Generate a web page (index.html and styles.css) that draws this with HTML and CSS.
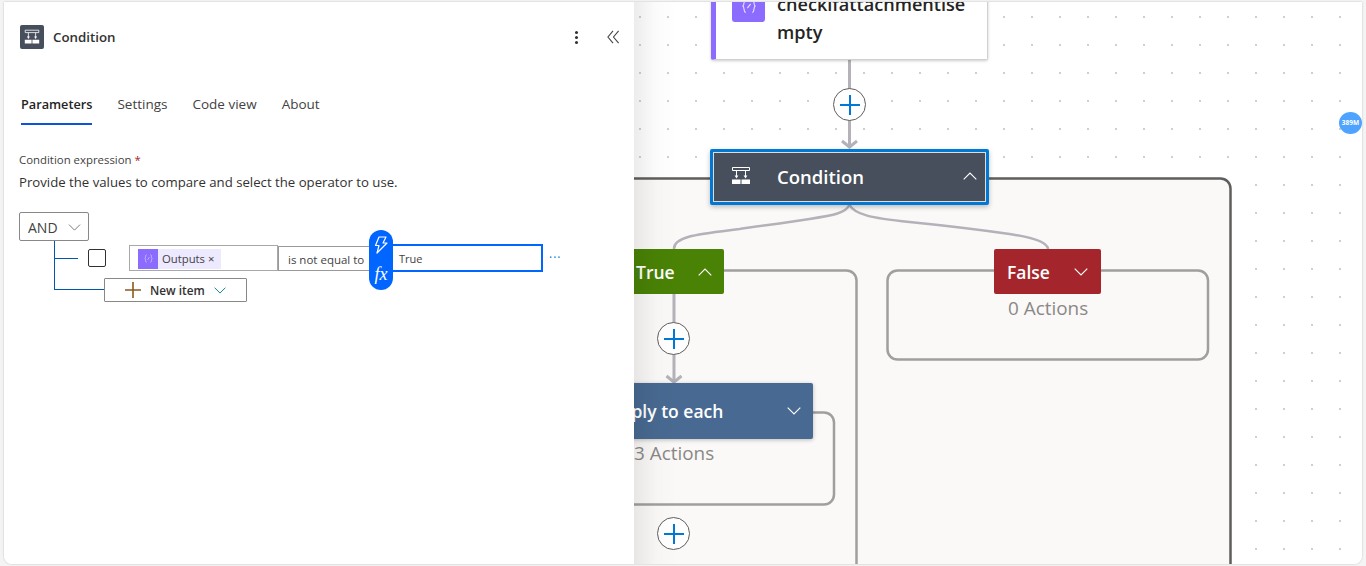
FILE: index.html
```html
<!DOCTYPE html>
<html lang="en">
<head>
<meta charset="utf-8">
<title>Condition</title>
<link rel="stylesheet" href="styles.css">
</head>
<body>
<svg class="defs" width="0" height="0" aria-hidden="true">
  <symbol id="cond" viewBox="0 0 20 20">
    <path d="M1.500 1.500h17v3h-17z M5.500 4.500v5.500 M14.500 4.500v5.500" fill="none" stroke="currentColor" stroke-width="1"/>
    <path d="M3.600 9.500h3.800L5.500 12.500z M12.600 9.500h3.800l-1.900 3z" fill="currentColor"/>
    <path d="M1 13.500h8.500v4.500H1z M10.500 13.500H19v4.500h-8.500z" fill="currentColor"/>
  </symbol>
  <symbol id="plus" viewBox="0 0 20 20">
    <path d="M10 0v20M0 10h20" fill="none" stroke="currentColor" stroke-width="2"/>
  </symbol>
  <symbol id="chev-down" viewBox="0 0 14 8">
    <path d="M.7.7 7 7 13.300.7" fill="none" stroke="currentColor" stroke-width="1.100"/>
  </symbol>
  <symbol id="chev-up" viewBox="0 0 14 8">
    <path d="M.7 7.300 7 1l6.300 6.300" fill="none" stroke="currentColor" stroke-width="1.100"/>
  </symbol>
  <symbol id="expr" viewBox="0 0 20 20">
    <path d="M7 4C5 4 6 9 4.500 10 6 11 5 16 7 16M13 4c2 0 1 5 2.500 6-1.500 1-.5 6-2.500 6M8.500 12l3-4" fill="none" stroke="currentColor" stroke-width="1"/>
  </symbol>
</svg>

<div class="frame">
  <aside class="panel">
    <header class="panel-head">
      <span class="panel-icon"><svg class="ico-16"><use href="#cond"/></svg></span>
      <h1 class="panel-title">Condition</h1>
      <span class="kebab"><i></i><i></i><i></i></span>
      <svg class="collapse" viewBox="0 0 14 14"><path d="M6.500.5 1 7l5.500 6.500M12.500.5 7 7l5.500 6.500" fill="none" stroke="#484644" stroke-width="1.200"/></svg>
    </header>

    <nav class="tabs">
      <span class="tab active">Parameters</span>
      <span class="tab">Settings</span>
      <span class="tab">Code view</span>
      <span class="tab">About</span>
    </nav>

    <div class="field-label">Condition expression <b>*</b></div>
    <p class="field-desc">Provide the values to compare and select the operator to use.</p>

    <div class="builder">
      <div class="and-box">AND <svg class="chev-and"><use href="#chev-down"/></svg></div>
      <div class="tree-v"></div>
      <div class="row">
        <span class="tree-h short"></span>
        <span class="check"></span>
        <div class="operand">
          <span class="token"><span class="token-icon"><svg class="ico-12"><use href="#expr"/></svg></span><span class="token-text">Outputs ×</span></span>
        </div>
        <div class="operator">is not equal to</div>
        <div class="value">True</div>
        <span class="more">···</span>
        <div class="bubble">
          <svg class="bolt" viewBox="0 0 14 18"><path d="M5 1h7L9 7h4L3 17l2-7.500H1.500z" fill="none" stroke="#fff" stroke-width="1.200" stroke-linejoin="round"/></svg>
          <span class="fx">fx</span>
        </div>
      </div>
      <div class="row-new">
        <span class="tree-h long"></span>
        <div class="new-item">
          <svg class="new-plus"><use href="#plus"/></svg>
          <span>New item</span>
          <svg class="new-chev"><use href="#chev-down"/></svg>
        </div>
      </div>
    </div>
  </aside>

  <main class="canvas">
    <svg class="edges" viewBox="634 2 728 562">
      <rect class="g-outer" x="600" y="178.500" width="630.500" height="500" rx="10"/>
      <rect class="g-inner" x="600" y="270.500" width="256.500" height="400" rx="10"/>
      <rect class="g-inner" x="887.500" y="270.500" width="320.500" height="89" rx="10"/>
      <rect class="g-inner" x="600" y="412.500" width="234" height="92" rx="10"/>
      <g class="wires">
        <path d="M849.500 59v87"/>
        <path d="M842 141l7.500 6 7.500-6"/>
        <path d="M674 294v87"/>
        <path d="M666.500 376l7.500 6 7.500-6"/>
      </g>
      <g class="curves">
        <path d="M849.500 205c-4 8-15 10-40 14-25 4-50 7-70 10-40 5-66 7-65.500 20"/>
        <path d="M849.500 205c5 9 20 13 60 17 30 3 65 7 100 12 20 3 38 8 38.500 15"/>
      </g>
    </svg>

    <div class="node action">
      <span class="act-icon"><svg class="ico-22"><use href="#expr"/></svg></span>
      <span class="act-text">checkifattachmentise mpty</span>
    </div>

    <div class="node cond-node">
      <svg class="cond-ico"><use href="#cond"/></svg>
      <span class="cond-text">Condition</span>
      <svg class="chev cond-chev"><use href="#chev-up"/></svg>
    </div>

    <div class="node branch true-b">
      <span>True</span>
      <svg class="chev"><use href="#chev-up"/></svg>
    </div>
    <div class="node branch false-b">
      <span>False</span>
      <svg class="chev"><use href="#chev-down"/></svg>
    </div>
    <div class="count false-c">0 Actions</div>

    <div class="node each">
      <span>Apply to each</span>
      <svg class="chev"><use href="#chev-down"/></svg>
    </div>
    <div class="count each-c">3 Actions</div>

    <span class="add a1"><svg class="ico-20"><use href="#plus"/></svg></span>
    <span class="add a2"><svg class="ico-20"><use href="#plus"/></svg></span>
    <span class="add a3"><svg class="ico-20"><use href="#plus"/></svg></span>

    <span class="mem">389M</span>
  </main>
</div>
</body>
</html>
```
FILE: styles.css
```css
* { box-sizing: border-box; }
html, body { margin: 0; height: 100%; }
body {
  background: #f4f4f4;
  font-family: "Open Sans", "Liberation Sans", sans-serif;
  color: #323130;
  overflow: hidden;
}
.defs { position: absolute; }

.frame {
  display: flex;
  height: 562px;
  margin: 2px 4px;
  border-radius: 0 0 8px 8px;
  overflow: hidden;
  background: #fff;
  box-shadow: 0 0 2px rgba(0,0,0,.25);
}

/* left panel */
.panel {
  width: 630px;
  flex: none;
  padding: 23px 14px 0 15px;
  background: #fff;
  position: relative;
  z-index: 2;
}
.panel-head { display: flex; align-items: center; height: 24px; margin-left: 1px; }
.panel-icon {
  width: 24px; height: 24px;
  display: flex; align-items: center; justify-content: center;
  background: #474f5c; border-radius: 2px; color: #fff;
}
.ico-16 { width: 16px; height: 16px; }
.panel-title { margin: 0 0 0 9px; font-size: 13.300px; font-weight: 600; flex: 1; }
.kebab { display: flex; flex-direction: column; gap: 2px; margin-right: 29px; }
.kebab i { width: 3px; height: 3px; border-radius: 50%; background: #323130; }
.collapse { width: 13px; height: 14px; }

.tabs { display: flex; margin: 46px 0 0 2px; gap: 25px; height: 30px; }
.tab { font-size: 13.500px; color: #424242; line-height: 19px; height: 30px; white-space: nowrap; }
.tab.active { font-size: 12.700px; font-weight: 600; color: #242424; border-bottom: 2px solid #0f54d8; }

.field-label { margin-top: 27px; font-size: 11.400px; line-height: 16px; color: #424242; }
.field-label b { color: #a4262c; font-weight: 400; }
.field-desc { margin: 5px 0 0; font-size: 13.200px; line-height: 18px; color: #323130; }

.builder { position: relative; margin-top: 21px; height: 100px; }
.and-box {
  width: 70px; height: 29px;
  display: flex; align-items: center; justify-content: space-between;
  padding: 1px 7px 0 8px;
  border: 1px solid #8a8886; border-radius: 2px;
  font-size: 14px; color: #424242;
}
.chev-and { width: 13px; height: 7px; color: #797775; }
.tree-v { position: absolute; left: 35px; top: 29px; width: 1px; height: 49px; background: #0058ad; }
.tree-h { position: absolute; height: 1px; background: #0058ad; }
.tree-h.short { left: 35px; top: 13px; width: 24px; }
.tree-h.long { left: 35px; top: 12px; width: 50px; }

.row { position: absolute; left: 0; top: 33px; width: 560px; height: 26px; }
.check {
  position: absolute; left: 69px; top: 4px;
  width: 18px; height: 18px;
  border: 1px solid #323130; border-radius: 2px;
}
.operand {
  position: absolute; left: 110px; top: 0;
  width: 149px; height: 26px;
  border: 1px solid #a8a8a8; padding: 2px 0 0 8px;
}
.token { display: inline-flex; height: 20px; background: #ede9fe; align-items: center; width: 83px; }
.token-icon { width: 20px; height: 20px; background: #8c6cff; display: flex; align-items: center; justify-content: center; color: #e0d8ff; flex: none; }
.ico-12 { width: 13px; height: 13px; }
.token-text { margin-left: 4px; font-size: 11.300px; color: #424242; white-space: nowrap; }
.operator {
  position: absolute; left: 259px; top: 1px;
  width: 96px; height: 25px;
  border: 1px solid #999; border-right: none;
  font-size: 11.500px; line-height: 26px; padding-left: 9px; color: #424242; white-space: nowrap;
}
.value {
  position: absolute; left: 372px; top: -1px;
  width: 152px; height: 28px;
  border: 2px solid #0066ff;
  font-size: 11px; line-height: 25px; padding-left: 6px; color: #424242;
}
.more { position: absolute; left: 530px; top: 5px; font-size: 12px; line-height: 16px; color: #0078d4; letter-spacing: 1px; }
.bubble {
  position: absolute; left: 350px; top: -15px;
  width: 24px; height: 60px;
  background: #0066ff; border-radius: 12px;
  display: flex; flex-direction: column; align-items: center; justify-content: space-between;
  padding: 6px 0 6px;
  color: #fff;
}
.bolt { width: 14px; height: 18px; }
.fx { font-family: "Liberation Serif", serif; font-style: italic; font-weight: 400; font-size: 18px; line-height: 20px; }

.row-new { position: absolute; left: 0; top: 65px; width: 300px; height: 24px; }
.new-item {
  position: absolute; left: 85px; top: 1px;
  width: 143px; height: 24px;
  border: 1px solid #8a8886; border-radius: 1px;
  display: flex; align-items: center; padding-left: 20px;
  font-size: 11.800px; font-weight: 600; color: #323130;
}
.new-plus { width: 16px; height: 16px; color: #8a5a1e; margin-right: 9px; flex: none; }
.new-chev { width: 12px; height: 7px; margin-left: 9px; color: #038387; }

/* canvas */
.canvas {
  flex: 1;
  position: relative;
  overflow: hidden;
  background-color: #fff;
  background-image: radial-gradient(circle, #b5b5b5 0.6px, transparent 0.9px);
  background-size: 28px 28px;
  background-position: -8px 1px;
}
.canvas::before {
  content: "";
  position: absolute;
  inset: 0 auto 0 0;
  width: 44px;
  background: linear-gradient(to right, rgba(0,0,0,.075), rgba(0,0,0,.015) 50%, rgba(0,0,0,0));
  z-index: 5;
  pointer-events: none;
}
.edges { position: absolute; left: 0; top: 0; width: 728px; height: 562px; }
.g-outer { fill: #faf9f8; stroke: #605e5c; stroke-width: 2.500; }
.g-inner { fill: #faf9f8; stroke: #a19f9d; stroke-width: 2.500; }
.wires { fill: none; stroke: #b4b1b8; stroke-width: 3; }
.curves { fill: none; stroke: #b4b1b8; stroke-width: 2.500; }

.node { position: absolute; border-radius: 2px; display: flex; align-items: center; }
.action {
  left: 77px; top: -60px; width: 277px; height: 118px;
  background: #fff; border: 1px solid #d2d0ce; border-left: 5px solid #8c6cff;
  box-shadow: 0 1px 3px rgba(0,0,0,.2);
  align-items: flex-start;
  padding: 47px 8px 0 16px;
}
.act-icon { width: 33px; height: 33px; border-radius: 3px; background: #8c6cff; color: #e8e2ff; display: flex; align-items: center; justify-content: center; flex: none; margin-top: -1px; }
.ico-22 { width: 22px; height: 22px; }
.act-text { margin-left: 12px; font-size: 18.100px; font-weight: 600; line-height: 28px; color: #242424; word-break: break-all; width: 200px; }

.cond-node {
  left: 76px; top: 147px; width: 279px; height: 56px;
  background: #474f5c;
  border: 3px solid #0078d4;
  outline: 1px solid #ddd; outline-offset: -4px;
  color: #fff; padding: 0 0 2px 18px;
  box-shadow: 0 2px 5px rgba(0,0,0,.25);
}
.cond-ico { width: 20px; height: 20px; margin-right: 26px; flex: none; }
.cond-text { font-size: 18.500px; font-weight: 600; flex: 1; }
.chev { width: 14px; height: 8px; flex: none; }
.cond-chev { margin-right: 9px; }

.branch { color: #fff; height: 45px; top: 247px; font-size: 17.500px; font-weight: 600; }
.true-b { left: -30px; width: 120px; background: #498205; padding-left: 32px; }
.true-b .chev { margin-left: 23px; }
.false-b { left: 360px; width: 107px; background: #a4262c; padding-left: 13px; }
.false-b .chev { margin-left: 24px; }

.each {
  left: -46px; top: 381px; width: 225px; height: 56px;
  background: #486991; color: #fff;
  font-size: 17.500px; font-weight: 600;
  padding-left: 21px;
  box-shadow: 0 1px 4px rgba(0,0,0,.25);
}
.each .chev { margin-left: 64px; }

.count { position: absolute; font-size: 18.900px; color: #8a8886; white-space: nowrap; }
.false-c { left: 374px; top: 293px; }
.each-c { left: 0; top: 438px; }

.add {
  position: absolute;
  width: 33px; height: 33px;
  background: #fff; border: 1.500px solid #605e5c; border-radius: 50%;
  display: flex; align-items: center; justify-content: center;
  color: #0078d4;
}
.ico-20 { width: 20px; height: 20px; }
.a1 { left: 199px; top: 86px; }
.a2 { left: 23px; top: 320px; }
.a3 { left: 23px; top: 515px; }

.mem {
  position: absolute; left: 705px; top: 110px;
  width: 23px; height: 22px; border-radius: 50%;
  background: #4da3ff; color: #fff;
  font-size: 6.500px; font-weight: 700; text-align: center; line-height: 22px;
  white-space: nowrap;
}
```
